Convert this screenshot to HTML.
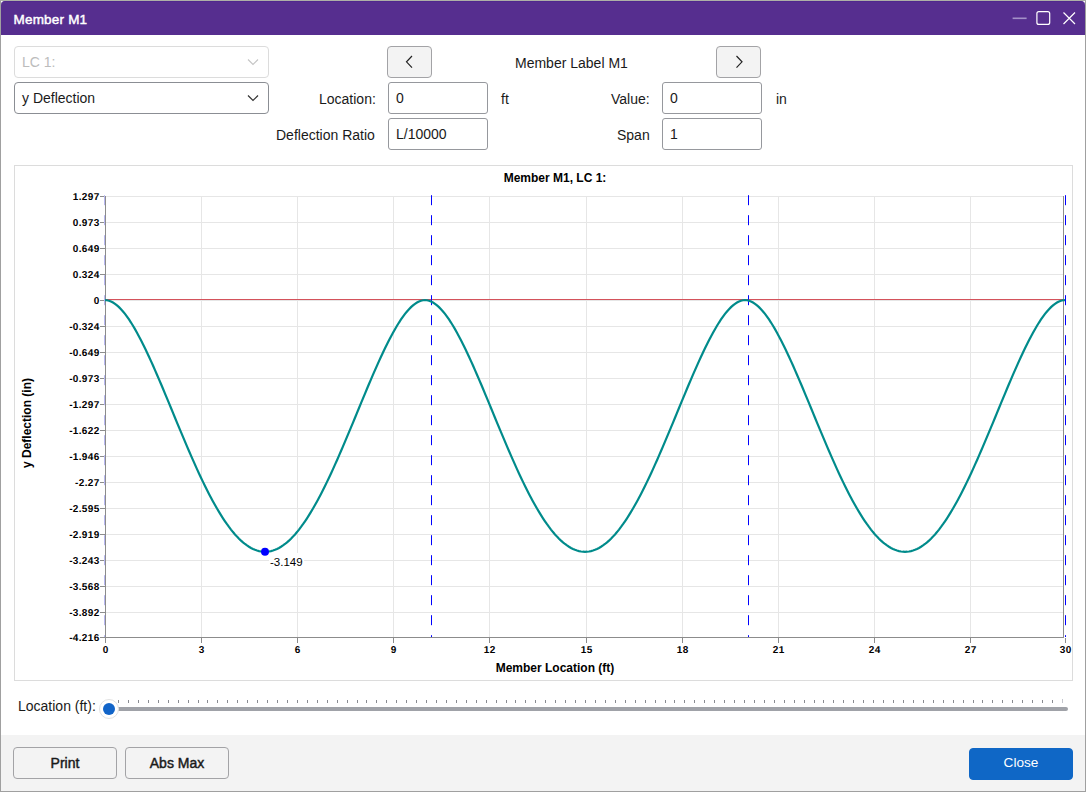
<!DOCTYPE html>
<html><head><meta charset="utf-8">
<style>
*{box-sizing:border-box;}
html,body{margin:0;padding:0;}
body{width:1086px;height:792px;position:relative;overflow:hidden;background:#fff;font-family:"Liberation Sans",sans-serif;color:#1a1a1a;}
.abs{position:absolute;}
#frame{position:absolute;left:0;top:0;width:1086px;height:792px;border:1px solid #a0a0a0;border-top-color:#adb0a7;}
#title{position:absolute;left:1px;top:1px;width:1084px;height:34px;background:#562e8f;border-radius:4px 4px 0 0;border-top:1px solid #50288e;}
#title .t{position:absolute;left:12.5px;top:10px;font-size:13.5px;letter-spacing:0.2px;font-weight:normal;-webkit-text-stroke:0.45px #fff;color:#fff;}
.combo{position:absolute;left:14px;width:255px;height:32px;border:1px solid #8b8e94;border-radius:4px;background:#fff;}
.combo.dis{border-color:#dcdcdc;}
.combo .v{position:absolute;left:7px;top:7px;font-size:14px;}
.btn{position:absolute;border:1px solid #a3a3a6;border-radius:4px;background:#f3f3f3;}
.tb{position:absolute;width:100px;height:32px;border:1px solid #96989d;border-radius:3px;background:#fff;}
.tb .v{position:absolute;left:7px;top:7px;font-size:14px;}
.lbl{position:absolute;font-size:14px;color:#1a1a1a;white-space:nowrap;}
#chart{position:absolute;left:14px;top:165px;width:1059px;height:516px;border:1px solid #dcdcdc;}
svg text.tl{font-family:"Liberation Sans",sans-serif;font-size:10px;font-weight:bold;fill:#000;letter-spacing:0.35px;text-rendering:geometricPrecision;}
svg text.tt{font-family:"Liberation Sans",sans-serif;font-size:12px;font-weight:bold;fill:#000;}
svg text.dl{font-family:"Liberation Sans",sans-serif;font-size:11.5px;fill:#000;}
#footer{position:absolute;left:1px;top:735px;width:1084px;height:56px;background:#f3f3f3;}
.fbtn{position:absolute;height:32px;border:1px solid #a3a3a6;border-radius:4px;background:#f3f3f3;font-size:14px;font-weight:normal;-webkit-text-stroke:0.45px #1a1a1a;text-align:center;line-height:30px;color:#1a1a1a;}
</style></head><body>
<div id="frame"></div>
<div id="title"><span class="t">Member M1</span>
<svg class="abs" style="left:0;top:-1px" width="1084" height="34">
<rect x="1011.6" y="16.5" width="14" height="1.6" fill="#a490c8"/>
<rect x="1035.9" y="10.6" width="12.8" height="12.8" rx="2" fill="none" stroke="#fff" stroke-width="1.2"/>
<path d="M1062.5 11.5 L1074 23 M1074 11.5 L1062.5 23" stroke="#fff" stroke-width="1.2"/>
</svg>
</div>

<div class="combo dis" style="top:46px;"><span class="v" style="color:#bcbcbc">LC 1:</span>
<svg class="abs" style="left:232px;top:11px" width="12" height="8"><path d="M1 1.5 L6 6.5 L11 1.5" fill="none" stroke="#c4c4c4" stroke-width="1.1"/></svg></div>
<div class="combo" style="top:82px;"><span class="v">y Deflection</span>
<svg class="abs" style="left:232px;top:11px" width="12" height="8"><path d="M1 1.5 L6 6.5 L11 1.5" fill="none" stroke="#333" stroke-width="1.2"/></svg></div>

<div class="btn" style="left:387px;top:46px;width:45px;height:32px;">
<svg class="abs" style="left:17px;top:8.2px" width="9" height="14"><path d="M7 1 L1.5 6.8 L7 12.6" fill="none" stroke="#222" stroke-width="1.2"/></svg></div>
<div class="btn" style="left:716px;top:46px;width:45px;height:32px;">
<svg class="abs" style="left:17.5px;top:8.2px" width="9" height="14"><path d="M1.5 1 L7 6.8 L1.5 12.6" fill="none" stroke="#222" stroke-width="1.2"/></svg></div>

<span class="lbl" style="left:515px;top:55px;">Member Label M1</span>
<span class="lbl" style="left:319px;top:91px;">Location:</span>
<div class="tb" style="left:388px;top:82px;"><span class="v">0</span></div>
<span class="lbl" style="left:501px;top:91px;">ft</span>
<span class="lbl" style="left:276px;top:127px;">Deflection Ratio</span>
<div class="tb" style="left:388px;top:118px;"><span class="v">L/10000</span></div>
<span class="lbl" style="left:611px;top:91px;">Value:</span>
<div class="tb" style="left:662px;top:82px;"><span class="v">0</span></div>
<span class="lbl" style="left:776px;top:91px;">in</span>
<span class="lbl" style="left:617px;top:127px;">Span</span>
<div class="tb" style="left:662px;top:118px;"><span class="v">1</span></div>

<div id="chart"></div>
<svg class="abs" style="left:0;top:0" width="1086" height="792">
<rect x="201" y="196" width="1" height="441" fill="#e6e6e6"/>
<rect x="297" y="196" width="1" height="441" fill="#e6e6e6"/>
<rect x="393" y="196" width="1" height="441" fill="#e6e6e6"/>
<rect x="489" y="196" width="1" height="441" fill="#e6e6e6"/>
<rect x="586" y="196" width="1" height="441" fill="#e6e6e6"/>
<rect x="682" y="196" width="1" height="441" fill="#e6e6e6"/>
<rect x="778" y="196" width="1" height="441" fill="#e6e6e6"/>
<rect x="874" y="196" width="1" height="441" fill="#e6e6e6"/>
<rect x="970" y="196" width="1" height="441" fill="#e6e6e6"/>
<rect x="105" y="222" width="958" height="1" fill="#e6e6e6"/>
<rect x="105" y="248" width="958" height="1" fill="#e6e6e6"/>
<rect x="105" y="274" width="958" height="1" fill="#e6e6e6"/>
<rect x="105" y="300" width="958" height="1" fill="#e6e6e6"/>
<rect x="105" y="326" width="958" height="1" fill="#e6e6e6"/>
<rect x="105" y="352" width="958" height="1" fill="#e6e6e6"/>
<rect x="105" y="378" width="958" height="1" fill="#e6e6e6"/>
<rect x="105" y="404" width="958" height="1" fill="#e6e6e6"/>
<rect x="105" y="430" width="958" height="1" fill="#e6e6e6"/>
<rect x="105" y="456" width="958" height="1" fill="#e6e6e6"/>
<rect x="105" y="482" width="958" height="1" fill="#e6e6e6"/>
<rect x="105" y="508" width="958" height="1" fill="#e6e6e6"/>
<rect x="105" y="534" width="958" height="1" fill="#e6e6e6"/>
<rect x="105" y="560" width="958" height="1" fill="#e6e6e6"/>
<rect x="105" y="586" width="958" height="1" fill="#e6e6e6"/>
<rect x="105" y="612" width="958" height="1" fill="#e6e6e6"/>
<rect x="105" y="196" width="958" height="1" fill="#e6e6e6"/>
<rect x="105" y="196" width="1" height="442" fill="#8c8c8c"/>
<rect x="105" y="637" width="959" height="1" fill="#8c8c8c"/>
<rect x="1063" y="196" width="1" height="442" fill="#8c8c8c"/>
<rect x="100" y="196" width="5" height="1" fill="#8c8c8c"/>
<rect x="100" y="222" width="5" height="1" fill="#8c8c8c"/>
<rect x="100" y="248" width="5" height="1" fill="#8c8c8c"/>
<rect x="100" y="274" width="5" height="1" fill="#8c8c8c"/>
<rect x="100" y="300" width="5" height="1" fill="#8c8c8c"/>
<rect x="100" y="326" width="5" height="1" fill="#8c8c8c"/>
<rect x="100" y="352" width="5" height="1" fill="#8c8c8c"/>
<rect x="100" y="378" width="5" height="1" fill="#8c8c8c"/>
<rect x="100" y="404" width="5" height="1" fill="#8c8c8c"/>
<rect x="100" y="430" width="5" height="1" fill="#8c8c8c"/>
<rect x="100" y="456" width="5" height="1" fill="#8c8c8c"/>
<rect x="100" y="482" width="5" height="1" fill="#8c8c8c"/>
<rect x="100" y="508" width="5" height="1" fill="#8c8c8c"/>
<rect x="100" y="534" width="5" height="1" fill="#8c8c8c"/>
<rect x="100" y="560" width="5" height="1" fill="#8c8c8c"/>
<rect x="100" y="586" width="5" height="1" fill="#8c8c8c"/>
<rect x="100" y="612" width="5" height="1" fill="#8c8c8c"/>
<rect x="100" y="637" width="5" height="1" fill="#8c8c8c"/>
<rect x="105" y="638" width="1" height="5" fill="#8c8c8c"/>
<rect x="201" y="638" width="1" height="5" fill="#8c8c8c"/>
<rect x="297" y="638" width="1" height="5" fill="#8c8c8c"/>
<rect x="393" y="638" width="1" height="5" fill="#8c8c8c"/>
<rect x="489" y="638" width="1" height="5" fill="#8c8c8c"/>
<rect x="586" y="638" width="1" height="5" fill="#8c8c8c"/>
<rect x="682" y="638" width="1" height="5" fill="#8c8c8c"/>
<rect x="778" y="638" width="1" height="5" fill="#8c8c8c"/>
<rect x="874" y="638" width="1" height="5" fill="#8c8c8c"/>
<rect x="970" y="638" width="1" height="5" fill="#8c8c8c"/>
<rect x="1065" y="638" width="1" height="5" fill="#8c8c8c"/>
<text transform="translate(99.6 199.7) scale(1 1)" text-anchor="end" class="tl">1.297</text>
<text transform="translate(99.6 225.7) scale(1 1)" text-anchor="end" class="tl">0.973</text>
<text transform="translate(99.6 251.7) scale(1 1)" text-anchor="end" class="tl">0.649</text>
<text transform="translate(99.6 277.7) scale(1 1)" text-anchor="end" class="tl">0.324</text>
<text transform="translate(99.6 303.7) scale(1 1)" text-anchor="end" class="tl">0</text>
<text transform="translate(99.6 329.7) scale(1 1)" text-anchor="end" class="tl">-0.324</text>
<text transform="translate(99.6 355.7) scale(1 1)" text-anchor="end" class="tl">-0.649</text>
<text transform="translate(99.6 381.7) scale(1 1)" text-anchor="end" class="tl">-0.973</text>
<text transform="translate(99.6 407.7) scale(1 1)" text-anchor="end" class="tl">-1.297</text>
<text transform="translate(99.6 433.7) scale(1 1)" text-anchor="end" class="tl">-1.622</text>
<text transform="translate(99.6 459.7) scale(1 1)" text-anchor="end" class="tl">-1.946</text>
<text transform="translate(99.6 485.7) scale(1 1)" text-anchor="end" class="tl">-2.27</text>
<text transform="translate(99.6 511.7) scale(1 1)" text-anchor="end" class="tl">-2.595</text>
<text transform="translate(99.6 537.7) scale(1 1)" text-anchor="end" class="tl">-2.919</text>
<text transform="translate(99.6 563.7) scale(1 1)" text-anchor="end" class="tl">-3.243</text>
<text transform="translate(99.6 589.7) scale(1 1)" text-anchor="end" class="tl">-3.568</text>
<text transform="translate(99.6 615.7) scale(1 1)" text-anchor="end" class="tl">-3.892</text>
<text transform="translate(99.6 640.7) scale(1 1)" text-anchor="end" class="tl">-4.216</text>
<text transform="translate(105.67 653.0) scale(1 1)" text-anchor="middle" class="tl">0</text>
<text transform="translate(201.67 653.0) scale(1 1)" text-anchor="middle" class="tl">3</text>
<text transform="translate(297.67 653.0) scale(1 1)" text-anchor="middle" class="tl">6</text>
<text transform="translate(393.67 653.0) scale(1 1)" text-anchor="middle" class="tl">9</text>
<text transform="translate(489.67 653.0) scale(1 1)" text-anchor="middle" class="tl">12</text>
<text transform="translate(586.67 653.0) scale(1 1)" text-anchor="middle" class="tl">15</text>
<text transform="translate(682.67 653.0) scale(1 1)" text-anchor="middle" class="tl">18</text>
<text transform="translate(778.67 653.0) scale(1 1)" text-anchor="middle" class="tl">21</text>
<text transform="translate(874.67 653.0) scale(1 1)" text-anchor="middle" class="tl">24</text>
<text transform="translate(970.67 653.0) scale(1 1)" text-anchor="middle" class="tl">27</text>
<text transform="translate(1065.67 653.0) scale(1 1)" text-anchor="middle" class="tl">30</text>
<rect x="106" y="299" width="958" height="1" fill="#d4525b"/>
<line x1="104.5" y1="195.2" x2="104.5" y2="637" stroke="#b8b8f0" stroke-width="1" stroke-dasharray="10 10"/>
<line x1="431.5" y1="195.2" x2="431.5" y2="637" stroke="#0000ff" stroke-width="1" stroke-dasharray="10 10"/>
<line x1="748.5" y1="195.2" x2="748.5" y2="637" stroke="#0000ff" stroke-width="1" stroke-dasharray="10 10"/>
<line x1="1065.5" y1="195.2" x2="1065.5" y2="637" stroke="#0000ff" stroke-width="1" stroke-dasharray="10 10"/>
<path d="M105.0 300.10 L107.0 300.26 L109.0 300.71 L111.0 301.46 L113.0 302.49 L115.0 303.79 L117.0 305.35 L119.0 307.15 L121.0 309.19 L123.0 311.45 L125.0 313.93 L127.0 316.61 L129.0 319.48 L131.0 322.54 L133.0 325.77 L135.0 329.17 L137.0 332.72 L139.0 336.42 L141.0 340.25 L143.0 344.20 L145.0 348.28 L147.0 352.46 L149.0 356.74 L151.0 361.11 L153.0 365.57 L155.0 370.10 L157.0 374.69 L159.0 379.34 L161.0 384.04 L163.0 388.79 L165.0 393.57 L167.0 398.37 L169.0 403.20 L171.0 408.03 L173.0 412.88 L175.0 417.72 L177.0 422.55 L179.0 427.37 L181.0 432.17 L183.0 436.94 L185.0 441.68 L187.0 446.38 L189.0 451.03 L191.0 455.64 L193.0 460.18 L195.0 464.67 L197.0 469.09 L199.0 473.43 L201.0 477.70 L203.0 481.89 L205.0 485.99 L207.0 490.00 L209.0 493.91 L211.0 497.73 L213.0 501.44 L215.0 505.04 L217.0 508.53 L219.0 511.91 L221.0 515.17 L223.0 518.31 L225.0 521.32 L227.0 524.21 L229.0 526.96 L231.0 529.58 L233.0 532.07 L235.0 534.41 L237.0 536.62 L239.0 538.68 L241.0 540.60 L243.0 542.37 L245.0 544.00 L247.0 545.47 L249.0 546.79 L251.0 547.96 L253.0 548.98 L255.0 549.84 L257.0 550.54 L259.0 551.09 L261.0 551.49 L263.0 551.72 L265.0 551.80 L267.0 551.72 L269.0 551.49 L271.0 551.09 L273.0 550.54 L275.0 549.84 L277.0 548.98 L279.0 547.96 L281.0 546.79 L283.0 545.47 L285.0 544.00 L287.0 542.37 L289.0 540.60 L291.0 538.68 L293.0 536.62 L295.0 534.41 L297.0 532.07 L299.0 529.58 L301.0 526.96 L303.0 524.21 L305.0 521.32 L307.0 518.31 L309.0 515.17 L311.0 511.91 L313.0 508.53 L315.0 505.04 L317.0 501.44 L319.0 497.73 L321.0 493.91 L323.0 490.00 L325.0 485.99 L327.0 481.89 L329.0 477.70 L331.0 473.43 L333.0 469.09 L335.0 464.67 L337.0 460.18 L339.0 455.64 L341.0 451.03 L343.0 446.38 L345.0 441.68 L347.0 436.94 L349.0 432.17 L351.0 427.37 L353.0 422.55 L355.0 417.72 L357.0 412.88 L359.0 408.03 L361.0 403.20 L363.0 398.37 L365.0 393.57 L367.0 388.79 L369.0 384.04 L371.0 379.34 L373.0 374.69 L375.0 370.10 L377.0 365.57 L379.0 361.11 L381.0 356.74 L383.0 352.46 L385.0 348.28 L387.0 344.20 L389.0 340.25 L391.0 336.42 L393.0 332.72 L395.0 329.17 L397.0 325.77 L399.0 322.54 L401.0 319.48 L403.0 316.61 L405.0 313.93 L407.0 311.45 L409.0 309.19 L411.0 307.15 L413.0 305.35 L415.0 303.79 L417.0 302.49 L419.0 301.46 L421.0 300.71 L423.0 300.26 L425.0 300.10 L427.0 300.26 L429.0 300.71 L431.0 301.46 L433.0 302.49 L435.0 303.79 L437.0 305.35 L439.0 307.15 L441.0 309.19 L443.0 311.45 L445.0 313.93 L447.0 316.61 L449.0 319.48 L451.0 322.54 L453.0 325.77 L455.0 329.17 L457.0 332.72 L459.0 336.42 L461.0 340.25 L463.0 344.20 L465.0 348.28 L467.0 352.46 L469.0 356.74 L471.0 361.11 L473.0 365.57 L475.0 370.10 L477.0 374.69 L479.0 379.34 L481.0 384.04 L483.0 388.79 L485.0 393.57 L487.0 398.37 L489.0 403.20 L491.0 408.03 L493.0 412.88 L495.0 417.72 L497.0 422.55 L499.0 427.37 L501.0 432.17 L503.0 436.94 L505.0 441.68 L507.0 446.38 L509.0 451.03 L511.0 455.64 L513.0 460.18 L515.0 464.67 L517.0 469.09 L519.0 473.43 L521.0 477.70 L523.0 481.89 L525.0 485.99 L527.0 490.00 L529.0 493.91 L531.0 497.73 L533.0 501.44 L535.0 505.04 L537.0 508.53 L539.0 511.91 L541.0 515.17 L543.0 518.31 L545.0 521.32 L547.0 524.21 L549.0 526.96 L551.0 529.58 L553.0 532.07 L555.0 534.41 L557.0 536.62 L559.0 538.68 L561.0 540.60 L563.0 542.37 L565.0 544.00 L567.0 545.47 L569.0 546.79 L571.0 547.96 L573.0 548.98 L575.0 549.84 L577.0 550.54 L579.0 551.09 L581.0 551.49 L583.0 551.72 L585.0 551.80 L587.0 551.72 L589.0 551.49 L591.0 551.09 L593.0 550.54 L595.0 549.84 L597.0 548.98 L599.0 547.96 L601.0 546.79 L603.0 545.47 L605.0 544.00 L607.0 542.37 L609.0 540.60 L611.0 538.68 L613.0 536.62 L615.0 534.41 L617.0 532.07 L619.0 529.58 L621.0 526.96 L623.0 524.21 L625.0 521.32 L627.0 518.31 L629.0 515.17 L631.0 511.91 L633.0 508.53 L635.0 505.04 L637.0 501.44 L639.0 497.73 L641.0 493.91 L643.0 490.00 L645.0 485.99 L647.0 481.89 L649.0 477.70 L651.0 473.43 L653.0 469.09 L655.0 464.67 L657.0 460.18 L659.0 455.64 L661.0 451.03 L663.0 446.38 L665.0 441.68 L667.0 436.94 L669.0 432.17 L671.0 427.37 L673.0 422.55 L675.0 417.72 L677.0 412.88 L679.0 408.03 L681.0 403.20 L683.0 398.37 L685.0 393.57 L687.0 388.79 L689.0 384.04 L691.0 379.34 L693.0 374.69 L695.0 370.10 L697.0 365.57 L699.0 361.11 L701.0 356.74 L703.0 352.46 L705.0 348.28 L707.0 344.20 L709.0 340.25 L711.0 336.42 L713.0 332.72 L715.0 329.17 L717.0 325.77 L719.0 322.54 L721.0 319.48 L723.0 316.61 L725.0 313.93 L727.0 311.45 L729.0 309.19 L731.0 307.15 L733.0 305.35 L735.0 303.79 L737.0 302.49 L739.0 301.46 L741.0 300.71 L743.0 300.26 L745.0 300.10 L747.0 300.26 L749.0 300.71 L751.0 301.46 L753.0 302.49 L755.0 303.79 L757.0 305.35 L759.0 307.15 L761.0 309.19 L763.0 311.45 L765.0 313.93 L767.0 316.61 L769.0 319.48 L771.0 322.54 L773.0 325.77 L775.0 329.17 L777.0 332.72 L779.0 336.42 L781.0 340.25 L783.0 344.20 L785.0 348.28 L787.0 352.46 L789.0 356.74 L791.0 361.11 L793.0 365.57 L795.0 370.10 L797.0 374.69 L799.0 379.34 L801.0 384.04 L803.0 388.79 L805.0 393.57 L807.0 398.37 L809.0 403.20 L811.0 408.03 L813.0 412.88 L815.0 417.72 L817.0 422.55 L819.0 427.37 L821.0 432.17 L823.0 436.94 L825.0 441.68 L827.0 446.38 L829.0 451.03 L831.0 455.64 L833.0 460.18 L835.0 464.67 L837.0 469.09 L839.0 473.43 L841.0 477.70 L843.0 481.89 L845.0 485.99 L847.0 490.00 L849.0 493.91 L851.0 497.73 L853.0 501.44 L855.0 505.04 L857.0 508.53 L859.0 511.91 L861.0 515.17 L863.0 518.31 L865.0 521.32 L867.0 524.21 L869.0 526.96 L871.0 529.58 L873.0 532.07 L875.0 534.41 L877.0 536.62 L879.0 538.68 L881.0 540.60 L883.0 542.37 L885.0 544.00 L887.0 545.47 L889.0 546.79 L891.0 547.96 L893.0 548.98 L895.0 549.84 L897.0 550.54 L899.0 551.09 L901.0 551.49 L903.0 551.72 L905.0 551.80 L907.0 551.72 L909.0 551.49 L911.0 551.09 L913.0 550.54 L915.0 549.84 L917.0 548.98 L919.0 547.96 L921.0 546.79 L923.0 545.47 L925.0 544.00 L927.0 542.37 L929.0 540.60 L931.0 538.68 L933.0 536.62 L935.0 534.41 L937.0 532.07 L939.0 529.58 L941.0 526.96 L943.0 524.21 L945.0 521.32 L947.0 518.31 L949.0 515.17 L951.0 511.91 L953.0 508.53 L955.0 505.04 L957.0 501.44 L959.0 497.73 L961.0 493.91 L963.0 490.00 L965.0 485.99 L967.0 481.89 L969.0 477.70 L971.0 473.43 L973.0 469.09 L975.0 464.67 L977.0 460.18 L979.0 455.64 L981.0 451.03 L983.0 446.38 L985.0 441.68 L987.0 436.94 L989.0 432.17 L991.0 427.37 L993.0 422.55 L995.0 417.72 L997.0 412.88 L999.0 408.03 L1001.0 403.20 L1003.0 398.37 L1005.0 393.57 L1007.0 388.79 L1009.0 384.04 L1011.0 379.34 L1013.0 374.69 L1015.0 370.10 L1017.0 365.57 L1019.0 361.11 L1021.0 356.74 L1023.0 352.46 L1025.0 348.28 L1027.0 344.20 L1029.0 340.25 L1031.0 336.42 L1033.0 332.72 L1035.0 329.17 L1037.0 325.77 L1039.0 322.54 L1041.0 319.48 L1043.0 316.61 L1045.0 313.93 L1047.0 311.45 L1049.0 309.19 L1051.0 307.15 L1053.0 305.35 L1055.0 303.79 L1057.0 302.49 L1059.0 301.46 L1061.0 300.71 L1063.0 300.26 L1065.0 300.10" fill="none" stroke="#008b8b" stroke-width="2.2"/>
<circle cx="265" cy="551.8" r="4" fill="#0000ff"/>
<rect x="269" y="553" width="35" height="17" fill="#fff"/><text x="270" y="566" class="dl">-3.149</text>
<text x="555" y="182" text-anchor="middle" class="tt">Member M1, LC 1:</text>
<text x="555" y="672" text-anchor="middle" class="tt">Member Location (ft)</text>
<text transform="translate(31 423) rotate(-90)" text-anchor="middle" class="tt">y Deflection (in)</text>
</svg>

<span class="lbl" style="left:18px;top:698px;">Location (ft):</span>
<svg class="abs" style="left:0;top:0" width="1086" height="792">
<rect x="100" y="707" width="968" height="4" rx="2" fill="#a0a2a8"/>
<rect x="118" y="700" width="1" height="3" fill="#8a8c92"/><rect x="128" y="700" width="1" height="3" fill="#8a8c92"/><rect x="138" y="700" width="1" height="3" fill="#8a8c92"/><rect x="148" y="700" width="1" height="3" fill="#8a8c92"/><rect x="158" y="700" width="1" height="3" fill="#8a8c92"/><rect x="168" y="700" width="1" height="3" fill="#8a8c92"/><rect x="178" y="700" width="1" height="3" fill="#8a8c92"/><rect x="188" y="700" width="1" height="3" fill="#8a8c92"/><rect x="198" y="700" width="1" height="3" fill="#8a8c92"/><rect x="207" y="700" width="1" height="3" fill="#8a8c92"/><rect x="217" y="700" width="1" height="3" fill="#8a8c92"/><rect x="227" y="700" width="1" height="3" fill="#8a8c92"/><rect x="237" y="700" width="1" height="3" fill="#8a8c92"/><rect x="247" y="700" width="1" height="3" fill="#8a8c92"/><rect x="257" y="700" width="1" height="3" fill="#8a8c92"/><rect x="267" y="700" width="1" height="3" fill="#8a8c92"/><rect x="277" y="700" width="1" height="3" fill="#8a8c92"/><rect x="287" y="700" width="1" height="3" fill="#8a8c92"/><rect x="297" y="700" width="1" height="3" fill="#8a8c92"/><rect x="307" y="700" width="1" height="3" fill="#8a8c92"/><rect x="317" y="700" width="1" height="3" fill="#8a8c92"/><rect x="327" y="700" width="1" height="3" fill="#8a8c92"/><rect x="337" y="700" width="1" height="3" fill="#8a8c92"/><rect x="347" y="700" width="1" height="3" fill="#8a8c92"/><rect x="357" y="700" width="1" height="3" fill="#8a8c92"/><rect x="366" y="700" width="1" height="3" fill="#8a8c92"/><rect x="376" y="700" width="1" height="3" fill="#8a8c92"/><rect x="386" y="700" width="1" height="3" fill="#8a8c92"/><rect x="396" y="700" width="1" height="3" fill="#8a8c92"/><rect x="406" y="700" width="1" height="3" fill="#8a8c92"/><rect x="416" y="700" width="1" height="3" fill="#8a8c92"/><rect x="426" y="700" width="1" height="3" fill="#8a8c92"/><rect x="436" y="700" width="1" height="3" fill="#8a8c92"/><rect x="446" y="700" width="1" height="3" fill="#8a8c92"/><rect x="456" y="700" width="1" height="3" fill="#8a8c92"/><rect x="466" y="700" width="1" height="3" fill="#8a8c92"/><rect x="476" y="700" width="1" height="3" fill="#8a8c92"/><rect x="486" y="700" width="1" height="3" fill="#8a8c92"/><rect x="496" y="700" width="1" height="3" fill="#8a8c92"/><rect x="506" y="700" width="1" height="3" fill="#8a8c92"/><rect x="515" y="700" width="1" height="3" fill="#8a8c92"/><rect x="525" y="700" width="1" height="3" fill="#8a8c92"/><rect x="535" y="700" width="1" height="3" fill="#8a8c92"/><rect x="545" y="700" width="1" height="3" fill="#8a8c92"/><rect x="555" y="700" width="1" height="3" fill="#8a8c92"/><rect x="565" y="700" width="1" height="3" fill="#8a8c92"/><rect x="575" y="700" width="1" height="3" fill="#8a8c92"/><rect x="585" y="700" width="1" height="3" fill="#8a8c92"/><rect x="595" y="700" width="1" height="3" fill="#8a8c92"/><rect x="605" y="700" width="1" height="3" fill="#8a8c92"/><rect x="615" y="700" width="1" height="3" fill="#8a8c92"/><rect x="625" y="700" width="1" height="3" fill="#8a8c92"/><rect x="635" y="700" width="1" height="3" fill="#8a8c92"/><rect x="645" y="700" width="1" height="3" fill="#8a8c92"/><rect x="655" y="700" width="1" height="3" fill="#8a8c92"/><rect x="665" y="700" width="1" height="3" fill="#8a8c92"/><rect x="674" y="700" width="1" height="3" fill="#8a8c92"/><rect x="684" y="700" width="1" height="3" fill="#8a8c92"/><rect x="694" y="700" width="1" height="3" fill="#8a8c92"/><rect x="704" y="700" width="1" height="3" fill="#8a8c92"/><rect x="714" y="700" width="1" height="3" fill="#8a8c92"/><rect x="724" y="700" width="1" height="3" fill="#8a8c92"/><rect x="734" y="700" width="1" height="3" fill="#8a8c92"/><rect x="744" y="700" width="1" height="3" fill="#8a8c92"/><rect x="754" y="700" width="1" height="3" fill="#8a8c92"/><rect x="764" y="700" width="1" height="3" fill="#8a8c92"/><rect x="774" y="700" width="1" height="3" fill="#8a8c92"/><rect x="784" y="700" width="1" height="3" fill="#8a8c92"/><rect x="794" y="700" width="1" height="3" fill="#8a8c92"/><rect x="804" y="700" width="1" height="3" fill="#8a8c92"/><rect x="814" y="700" width="1" height="3" fill="#8a8c92"/><rect x="823" y="700" width="1" height="3" fill="#8a8c92"/><rect x="833" y="700" width="1" height="3" fill="#8a8c92"/><rect x="843" y="700" width="1" height="3" fill="#8a8c92"/><rect x="853" y="700" width="1" height="3" fill="#8a8c92"/><rect x="863" y="700" width="1" height="3" fill="#8a8c92"/><rect x="873" y="700" width="1" height="3" fill="#8a8c92"/><rect x="883" y="700" width="1" height="3" fill="#8a8c92"/><rect x="893" y="700" width="1" height="3" fill="#8a8c92"/><rect x="903" y="700" width="1" height="3" fill="#8a8c92"/><rect x="913" y="700" width="1" height="3" fill="#8a8c92"/><rect x="923" y="700" width="1" height="3" fill="#8a8c92"/><rect x="933" y="700" width="1" height="3" fill="#8a8c92"/><rect x="943" y="700" width="1" height="3" fill="#8a8c92"/><rect x="953" y="700" width="1" height="3" fill="#8a8c92"/><rect x="963" y="700" width="1" height="3" fill="#8a8c92"/><rect x="973" y="700" width="1" height="3" fill="#8a8c92"/><rect x="982" y="700" width="1" height="3" fill="#8a8c92"/><rect x="992" y="700" width="1" height="3" fill="#8a8c92"/><rect x="1002" y="700" width="1" height="3" fill="#8a8c92"/><rect x="1012" y="700" width="1" height="3" fill="#8a8c92"/><rect x="1022" y="700" width="1" height="3" fill="#8a8c92"/><rect x="1032" y="700" width="1" height="3" fill="#8a8c92"/><rect x="1042" y="700" width="1" height="3" fill="#8a8c92"/><rect x="1052" y="700" width="1" height="3" fill="#8a8c92"/><rect x="1062" y="699" width="1" height="4" fill="#c4c6cc"/>
<circle cx="109" cy="709" r="9.5" fill="#fff" stroke="#e2e2e2" stroke-width="1"/>
<circle cx="109" cy="709" r="6" fill="#1164c8"/>
</svg>

<div id="footer"></div>
<div class="fbtn" style="left:13px;top:747px;width:104px;">Print</div>
<div class="fbtn" style="left:125px;top:747px;width:104px;">Abs Max</div>
<div class="fbtn" style="left:969px;top:748px;width:104px;background:#0f67c6;border-color:#0f67c6;color:#fff;font-weight:normal;-webkit-text-stroke:0;font-size:13.6px;letter-spacing:0;line-height:28px;">Close</div>
</body></html>
